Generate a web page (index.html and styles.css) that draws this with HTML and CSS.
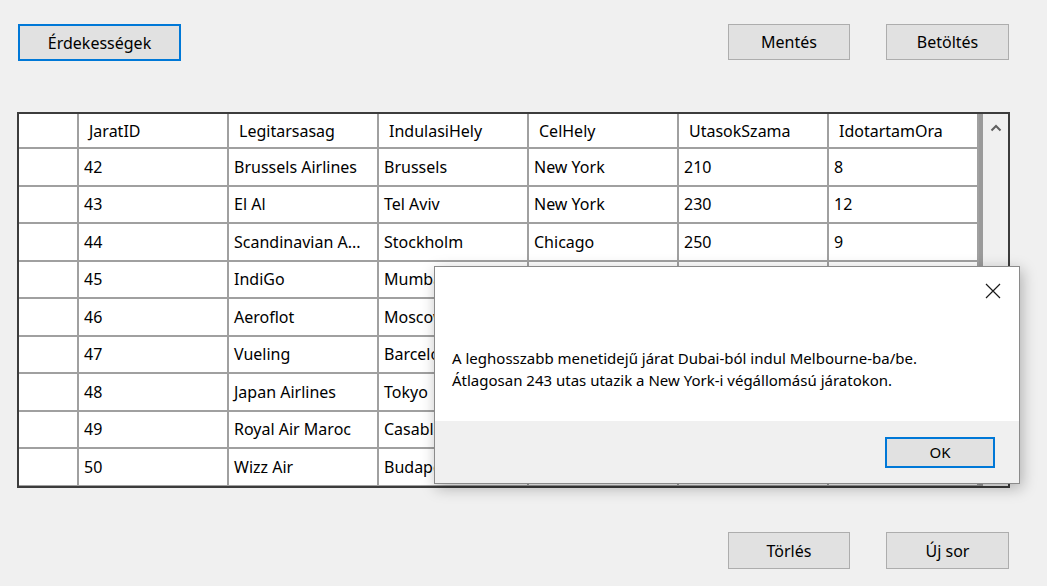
FILE: index.html
```html
<!DOCTYPE html>
<html lang="hu">
<head>
<meta charset="utf-8">
<title>Járatok</title>
<link rel="stylesheet" href="styles.css">
</head>
<body>
<div class="window">
  <div class="toolbar">
    <button class="btn btn-wide focused">Érdekességek</button>
    <div class="spacer"></div>
    <button class="btn">Mentés</button>
    <button class="btn btn-b">Betöltés</button>
  </div>

  <div class="grid">
    <div class="grid-body">
      <table class="table">
        <thead>
          <tr><th class="rh"></th><th>JaratID</th><th>Legitarsasag</th><th>IndulasiHely</th><th>CelHely</th><th>UtasokSzama</th><th>IdotartamOra</th></tr>
        </thead>
        <tbody>
          <tr><td class="rh"></td><td>42</td><td>Brussels Airlines</td><td>Brussels</td><td>New York</td><td>210</td><td>8</td></tr>
          <tr><td class="rh"></td><td>43</td><td>El Al</td><td>Tel Aviv</td><td>New York</td><td>230</td><td>12</td></tr>
          <tr><td class="rh"></td><td>44</td><td>Scandinavian A...</td><td>Stockholm</td><td>Chicago</td><td>250</td><td>9</td></tr>
          <tr><td class="rh"></td><td>45</td><td>IndiGo</td><td>Mumbai</td><td></td><td></td><td></td></tr>
          <tr><td class="rh"></td><td>46</td><td>Aeroflot</td><td>Moscow</td><td></td><td></td><td></td></tr>
          <tr><td class="rh"></td><td>47</td><td>Vueling</td><td>Barcelona</td><td></td><td></td><td></td></tr>
          <tr><td class="rh"></td><td>48</td><td>Japan Airlines</td><td>Tokyo</td><td></td><td></td><td></td></tr>
          <tr><td class="rh"></td><td>49</td><td>Royal Air Maroc</td><td>Casablanca</td><td></td><td></td><td></td></tr>
          <tr><td class="rh"></td><td>50</td><td>Wizz Air</td><td>Budapest</td><td></td><td></td><td></td></tr>
        </tbody>
      </table>
    </div>
    <div class="split"></div>
    <div class="scrollbar">
      <svg class="arrow" width="12" height="8" viewBox="0 0 12 8"><path d="M1.5 6.5 L6 2 L10.5 6.5" fill="none" stroke="#606060" stroke-width="2"/></svg>
    </div>
  </div>

  <div class="bottombar">
    <button class="btn">Törlés</button>
    <button class="btn btn-b">Új sor</button>
  </div>

  <div class="dialog">
    <div class="dialog-top">
      <div class="titlebar">
        <svg class="close" width="16" height="16" viewBox="0 0 16 16"><path d="M1 1 L15 15 M15 1 L1 15" stroke="#1a1a1a" stroke-width="1.2" fill="none"/></svg>
      </div>
      <div class="message">
        <p>A leghosszabb menetidejű járat Dubai-ból indul Melbourne-ba/be.</p>
        <p>Átlagosan 243 utas utazik a New York-i végállomású járatokon.</p>
      </div>
    </div>
    <div class="dialog-bottom">
      <button class="btn btn-ok focused">OK</button>
    </div>
  </div>
</div>
</body>
</html>
```

FILE: styles.css
```css
* { box-sizing: border-box; }

html, body {
  margin: 0;
  padding: 0;
  background: #f0f0f0;
}

body {
  width: 1047px;
  height: 586px;
  overflow: hidden;
  font-family: "Noto Sans", "Open Sans", sans-serif;
  font-size: 15px;
  color: #000;
}

.window {
  position: relative;
  width: 1047px;
  height: 586px;
}

.toolbar {
  display: flex;
  align-items: flex-start;
  padding: 24px 38px 0 18px;
  height: 61px;
}

.spacer { flex: 1; }

.btn {
  font-family: inherit;
  font-size: 16px;
  color: #000;
  background: #e1e1e1;
  border: 1px solid #adadad;
  height: 36px;
  width: 122px;
  padding: 0;
  margin: 0;
  line-height: 1;
}

.btn-b { margin-left: 36px; width: 123px; }

.btn-wide { width: 163px; height: 37px; }

.focused {
  border: 2px solid #0078d7;
}

.grid {
  margin: 51px 0 0 17px;
  width: 993px;
  height: 376px;
  border: 2px solid #3c3c3c;
  background: #f0f0f0;
  display: flex;
}

.grid-body {
  width: 960px;
  height: 100%;
  overflow: hidden;
  background: #fff;
}

.table {
  border-collapse: collapse;
  table-layout: fixed;
  width: 959px;
  font-size: 16px;
}

.table th, .table td {
  border-right: 2px solid #a0a0a0;
  border-bottom: 2px solid #a0a0a0;
  text-align: left;
  white-space: nowrap;
  overflow: hidden;
  font-weight: normal;
  padding: 0 0 0 5px;
  width: 150px;
}

.table th {
  height: 34px;
  padding-left: 10px;
  padding-top: 1px;
}

.table td { height: 37.5px; }

.table .rh { width: 59px; }

.split {
  width: 4px;
  background: #9a9a9a;
}

.scrollbar {
  flex: 1;
  display: flex;
  justify-content: center;
  padding-top: 10px;
  background: #f0f0f0;
}

.arrow { display: block; }

.bottombar {
  display: flex;
  justify-content: flex-end;
  padding: 0 38px 0 0;
  margin-top: 44px;
}

.bottombar .btn { height: 37px; }

.dialog {
  position: absolute;
  left: 434px;
  top: 266px;
  width: 586px;
  height: 218px;
  border: 1px solid #8a8a8a;
  background: #f0f0f0;
  box-shadow: 2px 4px 14px rgba(0, 0, 0, 0.28);
  display: flex;
  flex-direction: column;
}

.dialog-top {
  background: #fff;
  height: 154px;
}

.titlebar {
  display: flex;
  justify-content: flex-end;
  padding: 16px 18px 0 0;
  height: 40px;
}

.close { display: block; }

.message {
  padding: 40px 0 0 17px;
  font-size: 15px;
  line-height: 22px;
}

.message p { margin: 0; }

.dialog-bottom {
  flex: 1;
  display: flex;
  justify-content: flex-end;
  padding: 16px 24px 0 0;
}

.btn-ok {
  width: 110px;
  height: 31px;
  font-size: 15px;
}
```
